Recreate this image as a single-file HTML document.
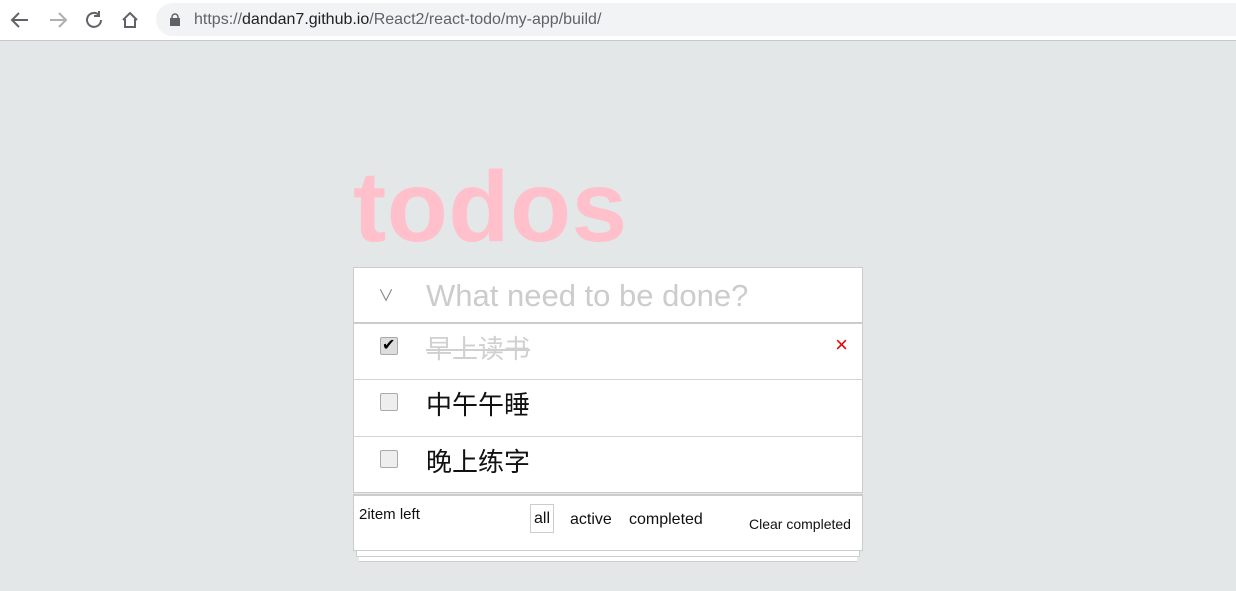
<!DOCTYPE html>
<html><head><meta charset="utf-8"><style>
*{margin:0;padding:0;box-sizing:border-box}
body{width:1236px;height:591px;background:#e4e7e8;font-family:"Liberation Sans","Noto Sans CJK SC",sans-serif;position:relative;overflow:hidden}
.bar{position:absolute;left:0;top:0;width:1236px;height:41px;background:#fff;border-bottom:1px solid #c8c8c8}
.url{position:absolute;left:156px;top:3px;width:1080px;height:33px;background:#f1f3f4;border-radius:17px 0 0 17px;font-size:16px;color:#5f6368;line-height:33px;padding-left:38px}
.url b{font-weight:normal;color:#202124}
.t{position:absolute;left:353px;top:150px;font-size:100px;font-weight:bold;color:#ffc0cb;letter-spacing:0.5px}
.box{position:absolute;left:353px;top:267px;width:510px;background:#fff;border:1px solid #ccc}
.row{position:relative;height:57px;border-top:1px solid #d5d5d5}
.cb{position:absolute;left:26px;top:13px;width:18px;height:18px;border:1px solid #aaa;border-radius:2px;background:#eee}
.txt{position:absolute;left:72px;top:5px;font-size:26px;color:#111}
.foot{position:absolute;left:353px;top:494px;width:510px;height:57px;background:#fff;border:1px solid #ccc;border-top:2px solid #ccc;font-size:16px;color:#111}
</style></head><body>
<div class="bar">
<svg style="position:absolute;left:10px;top:9px" width="140" height="22" fill="none" stroke-width="2">
<path d="M18 11H3M9 4l-7 7 7 7" stroke="#5f6368"/>
<path d="M40 11h15M49 4l7 7-7 7" stroke="#b0b0b0"/>
<path d="M89 6a7 7 0 1 0 2 5M89 2v5h-5" stroke="#5f6368"/>
<path d="M113 11l7-7 7 7M115 10v8h10v-8" stroke="#5f6368"/>
</svg>
<div class="url"><svg style="position:absolute;left:14px;top:10px" width="10" height="13"><rect x="0" y="5" width="10" height="8" fill="#5f6368"/><path d="M2 6V4a3 3 0 0 1 6 0v2" stroke="#5f6368" stroke-width="1.5" fill="none"/></svg>https://<b>dandan7.github.io</b>/React2/react-todo/my-app/build/</div>
</div>
<div class="t">todos</div>
<div class="box">
<div style="height:54px;position:relative"><span style="position:absolute;left:24px;top:14px;color:#888;font-size:16px">&#8744;</span><span style="position:absolute;left:72px;top:10px;font-size:31px;color:#ccc">What need to be done?</span></div>
<div class="row" style="border-top:2px solid #ccc"><div class="cb" style="background:#ddd"><span style="position:absolute;left:1px;top:-3px;font-size:16px">&#10004;</span></div><div class="txt" style="color:#d0d0d0;text-decoration:line-through">早上读书</div><span style="position:absolute;right:14px;top:8px;color:#e00;font-size:22px">×</span></div>
<div class="row"><div class="cb"></div><div class="txt">中午午睡</div></div>
<div class="row" style="height:56px"><div class="cb"></div><div class="txt">晚上练字</div></div>
</div>
<div class="foot">
<span style="position:absolute;left:5px;top:10px;font-size:15px">2item left</span>
<span style="position:absolute;left:176px;top:8px;border:1px solid #ccc;padding:6px 3px 5px;line-height:16px">all</span>
<span style="position:absolute;left:216px;top:15px">active</span>
<span style="position:absolute;left:275px;top:15px">completed</span>
<span style="position:absolute;left:395px;top:20px;font-size:14px">Clear completed</span>
</div>
<div style="position:absolute;left:356px;top:551px;width:504px;height:6px;background:#fff;border:1px solid #ccc;border-top:none"></div>
<div style="position:absolute;left:359px;top:557px;width:498px;height:5px;background:#fff;border-bottom:1px solid #ccc"></div>
</body></html>
